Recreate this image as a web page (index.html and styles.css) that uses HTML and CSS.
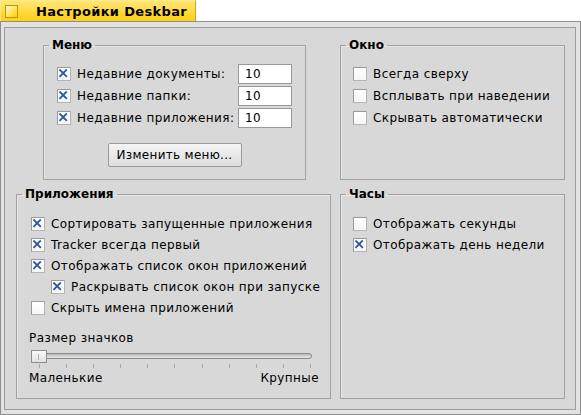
FILE: index.html
```html
<!DOCTYPE html>
<html lang="ru">
<head>
<meta charset="utf-8">
<title>Настройки Deskbar</title>
<link rel="stylesheet" href="styles.css">
</head>
<body>
<div class="tab">
  <span class="close"></span>
  <span class="title">Настройки Deskbar</span>
</div>
<div class="frame">
  <div class="content">
    <fieldset class="group menu">
      <legend>Меню</legend>
      <div class="menu-rows">
        <div class="menu-row">
          <label class="check"><span class="cb on"><svg viewBox="0 0 14 14"><path d="M3.5 3.5L10.5 10.5M10.5 3.5L3.5 10.5"/></svg></span>Недавние документы:</label>
          <span class="field">10</span>
        </div>
        <div class="menu-row">
          <label class="check"><span class="cb on"><svg viewBox="0 0 14 14"><path d="M3.5 3.5L10.5 10.5M10.5 3.5L3.5 10.5"/></svg></span>Недавние папки:</label>
          <span class="field">10</span>
        </div>
        <div class="menu-row">
          <label class="check"><span class="cb on"><svg viewBox="0 0 14 14"><path d="M3.5 3.5L10.5 10.5M10.5 3.5L3.5 10.5"/></svg></span>Недавние приложения:</label>
          <span class="field">10</span>
        </div>
      </div>
      <button class="btn" type="button">Изменить меню...</button>
    </fieldset>

    <fieldset class="group window">
      <legend>Окно</legend>
      <div class="rows rows22">
        <label class="check"><span class="cb"></span>Всегда сверху</label>
        <label class="check"><span class="cb"></span>Всплывать при наведении</label>
        <label class="check"><span class="cb"></span>Скрывать автоматически</label>
      </div>
    </fieldset>

    <fieldset class="group apps">
      <legend>Приложения</legend>
      <div class="rows rows21">
        <label class="check"><span class="cb on"><svg viewBox="0 0 14 14"><path d="M3.5 3.5L10.5 10.5M10.5 3.5L3.5 10.5"/></svg></span>Сортировать запущенные приложения</label>
        <label class="check"><span class="cb on"><svg viewBox="0 0 14 14"><path d="M3.5 3.5L10.5 10.5M10.5 3.5L3.5 10.5"/></svg></span>Tracker всегда первый</label>
        <label class="check"><span class="cb on"><svg viewBox="0 0 14 14"><path d="M3.5 3.5L10.5 10.5M10.5 3.5L3.5 10.5"/></svg></span>Отображать список окон приложений</label>
        <label class="check indent"><span class="cb on"><svg viewBox="0 0 14 14"><path d="M3.5 3.5L10.5 10.5M10.5 3.5L3.5 10.5"/></svg></span>Раскрывать список окон при запуске</label>
        <label class="check"><span class="cb"></span>Скрыть имена приложений</label>
      </div>
      <div class="size-label">Размер значков</div>
      <div class="slider">
        <div class="track"></div>
        <div class="thumb"></div>
      </div>
      <div class="ticks">
        <i></i><i></i><i></i><i></i><i></i><i></i><i></i><i></i><i></i><i></i><i></i>
      </div>
      <div class="limits"><span>Маленькие</span><span>Крупные</span></div>
    </fieldset>

    <fieldset class="group clock">
      <legend>Часы</legend>
      <div class="rows rows21">
        <label class="check"><span class="cb"></span>Отображать секунды</label>
        <label class="check"><span class="cb on"><svg viewBox="0 0 14 14"><path d="M3.5 3.5L10.5 10.5M10.5 3.5L3.5 10.5"/></svg></span>Отображать день недели</label>
      </div>
    </fieldset>
  </div>
</div>
</body>
</html>
```

FILE: styles.css
```css
html, body {
  margin: 0;
  padding: 0;
  background: #ffffff;
}

body {
  width: 581px;
  height: 415px;
  overflow: hidden;
  font-family: "DejaVu Sans", "Noto Sans", sans-serif;
  font-size: 12px;
  letter-spacing: 0.4px;
  color: #000;
}

.tab {
  width: 196px;
  height: 21px;
  box-sizing: border-box;
  border: 1px solid #c9a800;
  border-bottom: none;
  border-left-color: #ffe98a;
  border-top-color: #ffe98a;
  background: linear-gradient(#ffe778, #ffcf10);
  display: flex;
  align-items: center;
}

.close {
  width: 11px;
  height: 11px;
  margin-left: 4px;
  margin-top: 1px;
  border: 1px solid #b89700;
  background: linear-gradient(135deg, #fffbe6 0%, #ffe35a 55%, #ffcf00 100%);
}

.title {
  font-weight: bold;
  font-size: 13px;
  margin-left: 18px;
  letter-spacing: 0.35px;
}

.frame {
  height: 394px;
  box-sizing: border-box;
  border: 1px solid #8e8e8e;
  background: #e2e2e2;
  padding: 5px 4px 4px 3px;
}

.content {
  height: 100%;
  box-sizing: border-box;
  border: 1px solid #9c9c9c;
  background: #d8d8d8;
  padding: 10px 0 0 11px;
  display: grid;
  grid-template-columns: 315px 225px;
  grid-template-rows: 142px 212px;
  column-gap: 9px;
  row-gap: 7px;
}

.group {
  margin: 0;
  padding: 0 0 0 12px;
  min-width: 0;
  border: 1px solid #a2a2a2;
  box-shadow: inset 1px 1px 0 #e6e6e6;
  display: flex;
  flex-direction: column;
}

.group legend {
  font-weight: bold;
  letter-spacing: 0;
  padding: 0 3px;
  line-height: 14px;
  margin-left: -7px;
}

.menu {
  width: 263px;
  box-sizing: border-box;
  margin-left: 27px;
  padding: 0 13px 0 13px;
}

.menu legend {
  margin-left: -8px;
}

.menu-rows {
  margin-top: 12px;
  display: flex;
  flex-direction: column;
  gap: 2px;
}

.menu-row {
  display: flex;
  align-items: center;
  justify-content: space-between;
  height: 20px;
}

.field {
  width: 54px;
  height: 20px;
  box-sizing: border-box;
  border: 1px solid #9a9a9a;
  background: #fff;
  padding-left: 6px;
  line-height: 18px;
}

.check {
  display: flex;
  align-items: center;
  gap: 6px;
  white-space: nowrap;
}

.cb {
  width: 14px;
  height: 14px;
  box-sizing: border-box;
  border: 1px solid #9a9a9a;
  border-bottom-color: #b4b4b4;
  border-right-color: #b4b4b4;
  background: linear-gradient(#ffffff, #f6f6f6);
  flex: none;
  display: flex;
}

.cb svg {
  width: 12px;
  height: 12px;
}

.cb svg path {
  stroke: #2c5a9c;
  stroke-width: 2.2;
  fill: none;
  stroke-linecap: square;
  transform: translate(-1px, -1px);
}

.btn {
  margin: 15px auto 0;
  width: 134px;
  height: 24px;
  border: 1px solid #9a9a9a;
  border-radius: 2px;
  background: linear-gradient(#f4f4f4, #dedede);
  font-family: inherit;
  font-size: 12px;
  letter-spacing: 0.3px;
  color: #000;
  padding: 0;
}

.rows {
  display: flex;
  flex-direction: column;
}

.rows22 {
  margin-top: 11px;
}

.rows22 .check {
  height: 22px;
}

.rows21 {
  margin-top: 12px;
}

.rows21 .check {
  height: 21px;
}

.apps {
  padding-right: 11px;
}

.apps .check {
  margin-left: 2px;
}

.apps .check.indent {
  margin-left: 22px;
}

.size-label {
  margin-top: 13px;
  line-height: 14px;
}

.slider {
  position: relative;
  margin: 5px 7px 0 2px;
  height: 13px;
}

.track {
  margin-top: 3px;
  height: 6px;
  box-sizing: border-box;
  border: 1px solid #8a8a8a;
  border-radius: 0 3px 3px 0;
  background: linear-gradient(#b8b8b8, #e8e8e8);
}

.thumb {
  position: absolute;
  left: 0;
  top: 0;
  width: 16px;
  height: 13px;
  box-sizing: border-box;
  border: 1px solid #8e8e8e;
  background: linear-gradient(#fafafa, #e0e0e0);
}

.thumb::after {
  content: "";
  position: absolute;
  left: 6px;
  top: 3px;
  width: 1px;
  height: 6px;
  background: #b0b0b0;
}

.ticks {
  display: flex;
  justify-content: space-between;
  margin: 1px 8px 0 10px;
  height: 4px;
}

.ticks i {
  width: 1px;
  height: 4px;
  background: #a8a8a8;
}

.limits {
  display: flex;
  justify-content: space-between;
  margin-top: 3px;
  line-height: 14px;
}
```
